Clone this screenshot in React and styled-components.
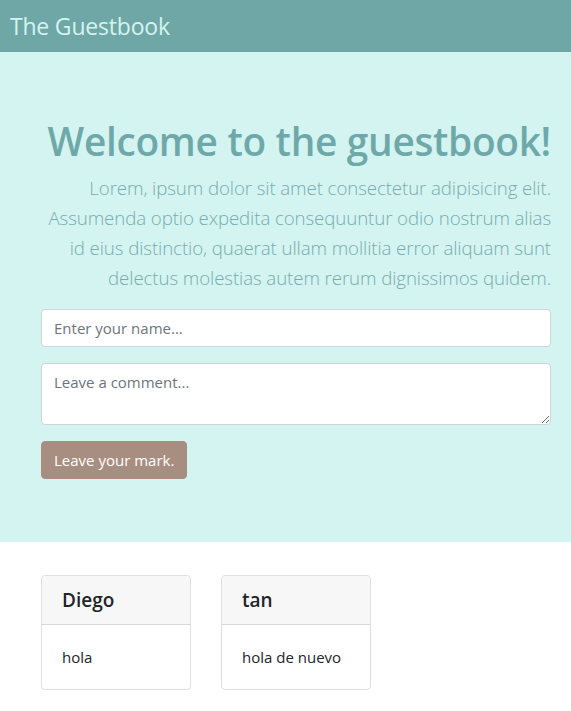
import React from "react"
import styled, { createGlobalStyle } from "styled-components"

const GlobalStyle = createGlobalStyle`
  body {
    margin: 0;
    font-family: "Segoe UI", "Open Sans", "Liberation Sans", sans-serif;
    color: #212529;
    background: #fff;
  }
  * { box-sizing: border-box; }
`

const Navbar = styled.nav`
  height: 52px;
  display: flex;
  align-items: center;
  padding: 0 10px;
  background: #6fa7a6;
`

const Brand = styled.span`
  font-size: 23px;
  color: #d4f4f2;
  letter-spacing: -0.2px;
`

const Jumbotron = styled.section`
  background: #d4f4f2;
  padding: 65px 20px 63px 41px;
`

const Title = styled.h1`
  margin: 0 0 8px;
  text-align: right;
  white-space: nowrap;
  font-size: 38.8px;
  line-height: 48px;
  font-weight: 600;
  color: #6fa8a8;
  letter-spacing: -0.3px;
`

const Lead = styled.p`
  margin: 0 0 16px;
  text-align: right;
  font-size: 18.7px;
  line-height: 30px;
  font-weight: 300;
  color: #78acad;
  letter-spacing: -0.1px;
`

const Line = styled.span`
  display: block;
  white-space: nowrap;
`

const Field = styled.div`
  margin-bottom: 16px;
`

const fieldStyles = `
  display: block;
  width: 100%;
  padding: 6px 12px;
  font-family: inherit;
  font-size: 15px;
  color: #495057;
  background: #fff;
  border: 1px solid #ced4da;
  border-radius: 4px;
  &::placeholder { color: #6c757d; }
`

const Input = styled.input`
  ${fieldStyles}
  height: 38px;
`

const TextArea = styled.textarea`
  ${fieldStyles}
  height: 62px;
  line-height: 24px;
  resize: vertical;
`

const Button = styled.button`
  height: 38px;
  padding: 0 12px;
  font-family: inherit;
  font-size: 15px;
  color: #fff;
  background: #a88e80;
  border: 1px solid #a88e80;
  border-radius: 4px;
`

const Cards = styled.section`
  display: flex;
  gap: 30px;
  padding: 33px 41px 20px;
`

const Card = styled.div`
  width: 150px;
  border: 1px solid rgba(0, 0, 0, 0.125);
  border-radius: 4px;
  overflow: hidden;
`

const CardHeader = styled.div`
  padding: 12px 20px;
  background: #f7f7f7;
  border-bottom: 1px solid rgba(0, 0, 0, 0.125);
  font-size: 19px;
  line-height: 24px;
  font-weight: 600;
`

const CardBody = styled.div`
  padding: 20px;
  font-size: 15px;
  line-height: 24px;
`

const entries = [
  { name: "Diego", comment: "hola" },
  { name: "tan", comment: "hola de nuevo" },
]

export default function App() {
  return (
    <>
      <GlobalStyle />
      <Navbar>
        <Brand>The Guestbook</Brand>
      </Navbar>
      <Jumbotron>
        <Title>Welcome to the guestbook!</Title>
        <Lead>
          <Line>Lorem, ipsum dolor sit amet consectetur adipisicing elit.</Line>
          <Line>Assumenda optio expedita consequuntur odio nostrum alias</Line>
          <Line>id eius distinctio, quaerat ullam mollitia error aliquam sunt</Line>
          <Line>delectus molestias autem rerum dignissimos quidem.</Line>
        </Lead>
        <Field>
          <Input placeholder="Enter your name..." />
        </Field>
        <Field>
          <TextArea placeholder="Leave a comment..." />
        </Field>
        <Button>Leave your mark.</Button>
      </Jumbotron>
      <Cards>
        {entries.map((e) => (
          <Card key={e.name}>
            <CardHeader>{e.name}</CardHeader>
            <CardBody>{e.comment}</CardBody>
          </Card>
        ))}
      </Cards>
    </>
  )
}
